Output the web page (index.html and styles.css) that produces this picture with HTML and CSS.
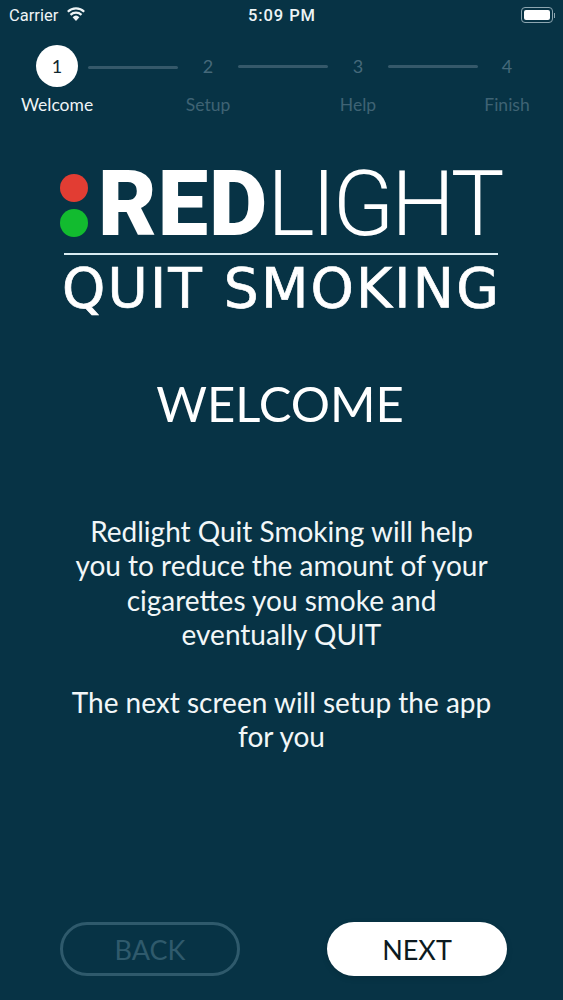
FILE: index.html
```html
<!DOCTYPE html>
<html lang="en">
<head>
    <meta charset="UTF-8">
    <meta name="viewport" content="width=device-width, initial-scale=1.0">
    <title>Redlight Quit Smoking</title>
    <link rel="stylesheet" href="styles.css">
</head>
<body>
    <div class="screen">
        <div class="status-bar">
            <div class="carrier">
                <span>Carrier</span>
                <svg class="wifi" width="18" height="14" viewBox="0 0 18 14">
                    <path d="M9 14 L5.6 10.2 A5 5 0 0 1 12.4 10.2 Z" fill="#eef4f6"/>
                    <path d="M3.5 7.9 A8 8 0 0 1 14.5 7.9" fill="none" stroke="#eef4f6" stroke-width="2.2"/>
                    <path d="M0.8 4.7 A12 12 0 0 1 17.2 4.7" fill="none" stroke="#eef4f6" stroke-width="2.2"/>
                </svg>
            </div>
            <div class="clock">5:09 PM</div>
            <div class="battery-wrap">
                <div class="battery"><div class="battery-fill"></div></div>
                <div class="battery-nub"></div>
            </div>
        </div>

        <div class="stepper">
            <div class="step-num active"><span>1</span></div>
            <div class="step-line low"></div>
            <div class="step-num">2</div>
            <div class="step-line"></div>
            <div class="step-num">3</div>
            <div class="step-line"></div>
            <div class="step-num">4</div>
            <div class="step-label on">Welcome</div>
            <div class="step-label col-3">Setup</div>
            <div class="step-label col-5">Help</div>
            <div class="step-label col-7">Finish</div>
        </div>

        <div class="logo">
            <div class="logo-top">
                <div class="lights">
                    <div class="light red"></div>
                    <div class="light green"></div>
                </div>
                <div class="logo-name"><b>RED</b>LIGHT</div>
            </div>
            <div class="logo-rule"></div>
            <div class="logo-sub">QUIT SMOKING</div>
        </div>

        <h1 class="title">WELCOME</h1>

        <div class="intro">
            <p>Redlight Quit Smoking will help<br>you to reduce the amount of your<br>cigarettes you smoke and<br>eventually QUIT</p>
            <p>The next screen will setup the app<br>for you</p>
        </div>

        <div class="buttons">
            <button type="button" class="btn btn-back">BACK</button>
            <button type="button" class="btn btn-next">NEXT</button>
        </div>
    </div>
</body>
</html>
```

FILE: styles.css
```css
/* Redlight welcome screen */
html, body {
    margin: 0;
    padding: 0;
}
body {
    background-color: #073345;
    font-family: Lato, "Open Sans", sans-serif;
    color: #fff;
}
.screen {
    width: 563px;
    height: 1000px;
    display: flex;
    flex-direction: column;
    overflow: hidden;
    background-color: #073345;
}

/* status bar */
.status-bar {
    height: 30px;
    display: grid;
    grid-template-columns: 1fr auto 1fr;
    align-items: center;
    padding: 0 8px 0 9px;
    font-family: Roboto, "Liberation Sans", sans-serif;
    font-size: 16.5px;
    color: #eef4f6;
}
.carrier {
    display: flex;
    align-items: center;
    gap: 9px;
}
.wifi {
    margin-top: -3px;
}
.clock {
    font-weight: 500;
    letter-spacing: 0.9px;
}
.battery-wrap {
    justify-self: end;
    display: flex;
    align-items: center;
    gap: 1px;
}
.battery {
    width: 32px;
    height: 16px;
    border: 1px solid #8da6b1;
    border-radius: 4px;
    padding: 2px;
    box-sizing: border-box;
}
.battery-fill {
    height: 100%;
    background-color: #fff;
    border-radius: 2px;
}
.battery-nub {
    width: 1px;
    height: 5px;
    background-color: #8da6b1;
}

/* stepper */
.stepper {
    display: grid;
    grid-template-columns: 60px 91px 60px 90px 60px 90px 58px;
    grid-template-rows: 42px auto;
    margin: 15px 0 0 27px;
    align-items: center;
    justify-items: center;
}
.step-num {
    font-size: 18px;
    color: #45697a;
}
.step-num.active {
    width: 42px;
    height: 42px;
    border-radius: 50%;
    background-color: #fff;
    color: #10262f;
    display: flex;
    align-items: center;
    justify-content: center;
}
.step-line {
    width: 90px;
    height: 3px;
    background-color: #35596a;
    border-radius: 2px;
}
.step-line.low {
    margin-top: 2px;
}
.step-label {
    grid-row: 2;
    white-space: nowrap;
    font-size: 17.5px;
    line-height: 20px;
    margin-top: 8px;
    color: #3f6374;
}
.step-label.on {
    grid-column: 1;
    color: #eef4f6;
}
.col-3 { grid-column: 3; }
.col-5 { grid-column: 5; }
.col-7 { grid-column: 7; }

/* logo */
.logo {
    width: 440px;
    margin: 53px 0 0 60px;
    display: flex;
    flex-direction: column;
}
.logo-top {
    display: flex;
    align-items: center;
    height: 74px;
}
.lights {
    display: flex;
    flex-direction: column;
    gap: 7px;
    margin-right: 10px;
}
.light {
    width: 28px;
    height: 28px;
    border-radius: 50%;
}
.light.red { background-color: #e23d33; }
.light.green { background-color: #12bb2f; }
.logo-name {
    font-family: Roboto, "Liberation Sans", sans-serif;
    font-size: 90px;
    line-height: 76px;
    font-weight: 300;
    letter-spacing: -3px;
    white-space: nowrap;
}
.logo-name b {
    font-weight: 900;
    letter-spacing: 1px;
    margin-right: -1px;
}
.logo-rule {
    height: 2px;
    background-color: #d9ecf2;
    margin: 11px 2px 0 4px;
}
.logo-sub {
    font-family: "DejaVu Sans", "Liberation Sans", sans-serif;
    font-size: 55px;
    line-height: 60px;
    letter-spacing: 2.2px;
    -webkit-text-stroke: 0.7px #fff;
    white-space: nowrap;
    margin: 3px 0 0 2px;
}

/* text */
.title {
    margin: 55px 0 0;
    font-size: 49px;
    line-height: 60px;
    font-weight: 400;
    text-align: center;
    color: #fff;
    padding-right: 3px;
}
.intro {
    margin-top: 81px;
    font-size: 28px;
    line-height: 34.3px;
    text-align: center;
    color: #f2f7f8;
}
.intro p {
    margin: 0 0 34px;
}

/* buttons */
.buttons {
    margin-top: auto;
    margin-bottom: 24px;
    padding: 0 56px 0 60px;
    display: flex;
    justify-content: space-between;
}
.btn {
    width: 180px;
    height: 54px;
    border-radius: 27px;
    font-family: Lato, "Open Sans", sans-serif;
    font-size: 27px;
    box-sizing: border-box;
    padding: 0;
}
.btn-back {
    background: none;
    border: 3px solid #2f5a6c;
    color: #2f5a6c;
}
.btn-next {
    background-color: #fff;
    border: none;
    color: #0c1a20;
    box-shadow: 0 2px 6px rgba(0, 0, 0, 0.12);
}
```
